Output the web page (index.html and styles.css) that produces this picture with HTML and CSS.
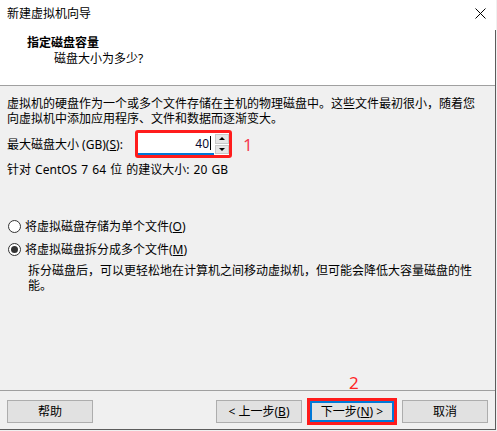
FILE: index.html
```html
<!DOCTYPE html>
<html lang="zh-CN">
<head>
<meta charset="utf-8">
<title>新建虚拟机向导</title>
<link rel="stylesheet" href="styles.css">
</head>
<body>
<div class="window">
  <div class="titlebar">
    <div class="title">新建虚拟机向导</div>
    <svg class="close" width="11" height="11" viewBox="0 0 11 11"><path d="M0.5 0.5 L10.5 10.5 M10.5 0.5 L0.5 10.5" stroke="#000" stroke-width="1" fill="none"/></svg>
  </div>
  <div class="dialog">
    <div class="header">
      <div class="header-title">指定磁盘容量</div>
      <div class="header-sub">磁盘大小为多少?</div>
    </div>
    <div class="content">
      <p class="intro"><span class="line">虚拟机的硬盘作为一个或多个文件存储在主机的物理磁盘中。这些文件最初很小，随着您</span><span class="line">向虚拟机中添加应用程序、文件和数据而逐渐变大。</span></p>
      <div class="size-row">
        <span class="field-label">最大磁盘大小 (GB)(<u>S</u>):</span>
        <div class="field">
          <div class="field-value">40<span class="caret"></span></div>
          <div class="spinner">
            <div class="spin-btn"><span class="arrow-up"></span></div>
            <div class="spin-btn"><span class="arrow-down"></span></div>
          </div>
        </div>
        <span class="mark mark-1">1</span>
      </div>
      <p class="recommend">针对 CentOS 7 64 位 的建议大小: 20 GB</p>
      <div class="radio-row first">
        <span class="radio"></span>
        <span>将虚拟磁盘存储为单个文件(<u>O</u>)</span>
      </div>
      <div class="radio-row second">
        <span class="radio checked"></span>
        <span>将虚拟磁盘拆分成多个文件(<u>M</u>)</span>
      </div>
      <p class="desc"><span class="line">拆分磁盘后，可以更轻松地在计算机之间移动虚拟机，但可能会降低大容量磁盘的性</span><span class="line">能。</span></p>
    </div>
    <div class="footer">
      <button class="btn">帮助</button>
      <div class="nav">
        <button class="btn">&lt; 上一步(<u>B</u>)</button>
        <div class="next-wrap">
          <span class="mark mark-2">2</span>
          <button class="btn btn-next">下一步(<u>N</u>) &gt;</button>
        </div>
        <button class="btn">取消</button>
      </div>
    </div>
  </div>
</div>
</body>
</html>
```
FILE: styles.css
```css
html, body {
  margin: 0;
  padding: 0;
  background: #f0f0f0;
}
body {
  width: 497px;
  height: 431px;
  overflow: hidden;
  font-family: "Noto Sans", "Noto Sans CJK SC", sans-serif;
  font-size: 12px;
  color: #000;
}
u {
  text-decoration: underline;
  text-underline-offset: 1px;
}
.window {
  width: 496px;
  height: 430px;
  display: flex;
  flex-direction: column;
}
.titlebar {
  height: 30px;
  flex: none;
  background: #fff;
  display: flex;
  justify-content: space-between;
  align-items: flex-start;
}
.title {
  margin: 6px 0 0 7px;
  line-height: 16px;
}
.close {
  margin: 8px 10px 0 0;
}
.dialog {
  flex: 1;
  display: flex;
  flex-direction: column;
  border-right: 1px solid #5c5c5c;
  border-bottom: 1px solid #5c5c5c;
  min-height: 0;
}
.header {
  height: 56px;
  flex: none;
  box-sizing: border-box;
  background: #fff;
  border-bottom: 1px solid #a0a0a0;
  padding-top: 5px;
}
.header-title {
  font-weight: bold;
  line-height: 16px;
  padding-left: 27px;
}
.header-sub {
  line-height: 16px;
  padding-left: 54px;
}
.content {
  flex: 1;
  padding: 10px 0 0 7px;
  line-height: 15px;
  white-space: nowrap;
}
.intro {
  margin: 0;
}
.line {
  display: block;
  height: 15px;
  line-height: 15px;
}
.size-row {
  margin-top: 4px;
  height: 28px;
  display: flex;
  align-items: center;
}
.field-label {
  width: 128px;
  flex: none;
}
.field {
  width: 97px;
  height: 28px;
  box-sizing: border-box;
  border: 3px solid #ff1c1c;
  border-radius: 3px;
  background: #fff;
  display: flex;
}
.field-value {
  flex: 1;
  display: flex;
  justify-content: flex-end;
  align-items: center;
  padding-right: 3px;
  border-bottom: 2px solid #0078d7;
  color: #0a0a30;
}
.caret {
  width: 1px;
  height: 14px;
  background: #000;
  margin-left: 1px;
}
.spinner {
  width: 14px;
  display: flex;
  flex-direction: column;
  gap: 1px;
  padding: 1px 0 1px 1px;
}
.spin-btn {
  flex: 1;
  background: #e6e6e6;
  border: 1px solid #c9c9c9;
  display: flex;
  align-items: center;
  justify-content: center;
}
.arrow-up {
  width: 0;
  height: 0;
  border-left: 3px solid transparent;
  border-right: 3px solid transparent;
  border-bottom: 3px solid #000;
}
.arrow-down {
  width: 0;
  height: 0;
  border-left: 3px solid transparent;
  border-right: 3px solid transparent;
  border-top: 3px solid #000;
}
.mark {
  font-family: "Noto Sans", sans-serif;
  font-size: 17px;
  line-height: 17px;
}
.mark-1 {
  margin-left: 11px;
  color: #f53a50;
}
.recommend {
  margin: 4px 0 0;
  word-spacing: 1px;
}
.radio-row {
  height: 16px;
  display: flex;
  align-items: center;
  gap: 4px;
  padding-left: 1px;
}
.radio-row.first {
  margin-top: 41px;
}
.radio-row.second {
  margin-top: 7px;
}
.radio {
  width: 13px;
  height: 13px;
  box-sizing: border-box;
  border: 1px solid #333;
  border-radius: 50%;
  background: #fff;
  display: flex;
  align-items: center;
  justify-content: center;
}
.radio.checked::after {
  content: "";
  width: 7px;
  height: 7px;
  border-radius: 50%;
  background: #333;
}
.desc {
  margin: 6px 0 0 21px;
}
.footer {
  height: 39px;
  flex: none;
  box-sizing: border-box;
  border-top: 1px solid #a0a0a0;
  padding: 9px 7px 0 7px;
  display: flex;
  align-items: flex-start;
  justify-content: space-between;
}
.nav {
  display: flex;
  gap: 11px;
}
.nav .btn:last-child {
  margin-left: -4px;
}
.btn {
  width: 86px;
  height: 23px;
  box-sizing: border-box;
  margin: 0;
  padding: 0;
  border: 1px solid #adadad;
  background: #e1e1e1;
  font-family: inherit;
  font-size: 12px;
  color: #000;
  line-height: 20px;
}
.next-wrap {
  position: relative;
}
.btn-next {
  border-color: #0078d7;
  box-shadow: inset 0 0 0 2px #0078d7;
  outline: 3px solid #ff1c1c;
  outline-offset: -1px;
}
.mark-2 {
  position: absolute;
  left: 36px;
  top: -26px;
  color: #ff2626;
}
```
